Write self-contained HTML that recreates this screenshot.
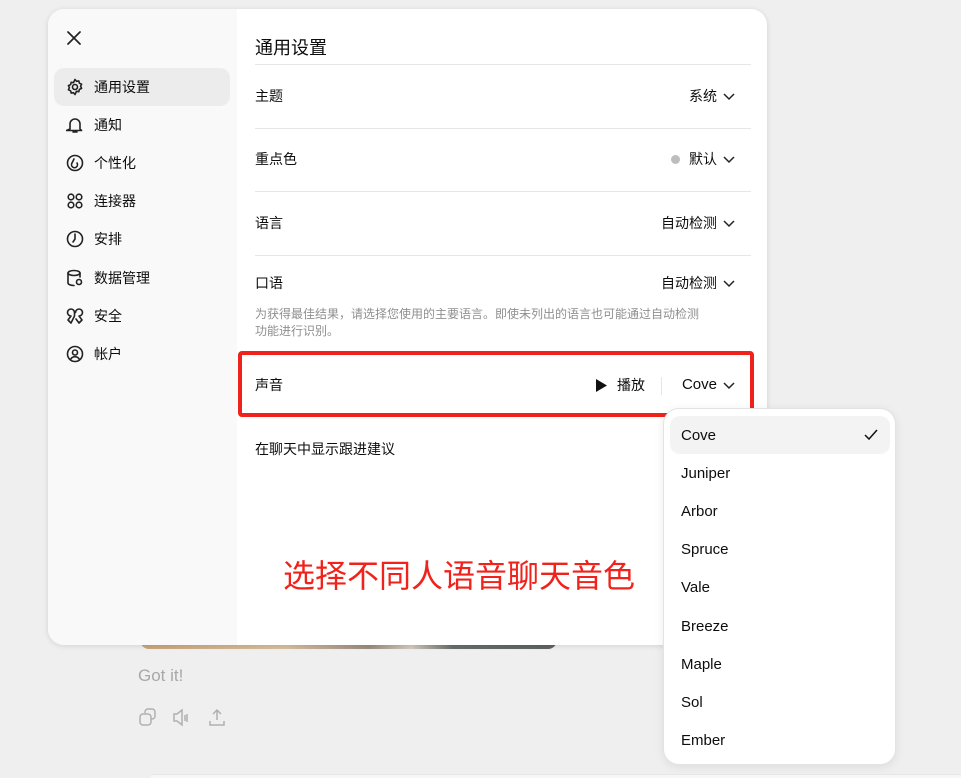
<!DOCTYPE html>
<html><head><meta charset="utf-8"><style>
*{box-sizing:border-box;margin:0;padding:0}
body{width:961px;height:778px;background:#efefef;font-family:"Liberation Sans","Noto Sans CJK SC",sans-serif;position:relative;overflow:hidden;color:#0d0d0d}
.modal{position:absolute;left:48px;top:9px;width:719px;height:636px;background:#fff;border-radius:16px;overflow:hidden;box-shadow:0 1px 6px rgba(0,0,0,.12);display:flex}
.side{width:189px;background:#f9f9f9;position:relative}
.item{position:absolute;left:6px;width:176px;height:38px;display:flex;align-items:center;padding-left:12px;font-size:14px;border-radius:10px}
.item svg{width:18px;height:18px;margin-right:10px;fill:none;stroke:#222;stroke-width:1.6;stroke-linecap:round;stroke-linejoin:round}
.main{position:relative;flex:1}
.title{position:absolute;left:18px;top:25px;font-size:18px}
.hr{position:absolute;left:18px;right:16px;height:1px;background:#e6e6e6}
.lbl{position:absolute;left:18px;font-size:14px;line-height:20px}
.val{position:absolute;right:50px;font-size:14px;line-height:20px;display:flex;align-items:center}
.chev{position:absolute;right:32px;width:12px;height:8px}
.help{position:absolute;left:18px;top:297px;width:450px;font-size:12px;color:#8f8f8f;line-height:17px}
.red{position:absolute;left:238px;top:351px;width:516px;height:66px;border:4px solid #f0231c;border-radius:4px}
.menu{position:absolute;left:663px;top:408px;width:233px;height:357px;background:#fff;border:1px solid #e3e3e3;border-radius:16px;box-shadow:0 2px 10px rgba(0,0,0,.08)}
.mi{position:absolute;left:6px;width:220px;height:38px;padding-left:11px;display:flex;align-items:center;font-size:15px;border-radius:10px}
</style></head><body>
<div style="position:absolute;left:140px;top:640px;width:417px;height:9px;border-radius:0 0 10px 10px;background:linear-gradient(90deg,#c9a57a,#d8c0a0 35%,#9a8d80 55%,#d5ccc0 65%,#6a6d6e 75%,#5f6263)"></div>
<div style="position:absolute;left:138px;top:666px;font-size:17px;color:#a8a8a8">Got it!</div>
<svg style="position:absolute;left:139px;top:708px" width="100" height="20" fill="none" stroke="#b0b0b0" stroke-width="1.5"><rect x="1" y="6" width="11" height="11" rx="3"/><path d="M6 5V4a3 3 0 013-3h4a3 3 0 013 3v4a3 3 0 01-3 3h-1"/><path d="M35 6h3l5-4v15l-5-4h-3z M46 7v6 M48 6v8"/><path d="M78 12V2 M74 6l4-4 4 4 M71 13v4h14v-4"/></svg>
<div style="position:absolute;left:150px;top:774px;width:811px;height:4px;background:#f7f7f7;border-top:1px solid #e6e6e6;border-radius:8px 0 0 0"></div>
<div class="modal">
<div class="side">
<svg style="position:absolute;left:19px;top:22px" width="14" height="14" stroke="#222" stroke-width="1.7" stroke-linecap="round"><path d="M1 1l12 12M13 1L1 13"/></svg>
<div class="item" style="top:59px;background:#ececec"><svg viewBox="0 0 18 18"><circle cx="9" cy="9" r="2.5"/><path d="M9 1.5l1.5 1.8 2.3-.4.6 2.3 2.2 1-1 2.1 1 2.1-2.2 1-.6 2.3-2.3-.4L9 16.5l-1.5-1.8-2.3.4-.6-2.3-2.2-1 1-2.1-1-2.1 2.2-1 .6-2.3 2.3.4z"/></svg>通用设置</div>
<div class="item" style="top:97px"><svg viewBox="0 0 18 18"><path d="M4 13V8a5 5 0 0110 0v5l1.5 1.5h-15z M7 16h4"/></svg>通知</div>
<div class="item" style="top:135px"><svg viewBox="0 0 18 18"><circle cx="9" cy="9" r="7.5"/><path d="M8 5l-2 4a3 3 0 105 0"/></svg>个性化</div>
<div class="item" style="top:173px"><svg viewBox="0 0 18 18"><circle cx="5" cy="5" r="2.8"/><circle cx="13" cy="5" r="2.8"/><circle cx="5" cy="13" r="2.8"/><circle cx="13" cy="13" r="2.8"/></svg>连接器</div>
<div class="item" style="top:211px"><svg viewBox="0 0 18 18"><circle cx="9" cy="9" r="7.5"/><path d="M9 4v5l-2 3"/></svg>安排</div>
<div class="item" style="top:250px"><svg viewBox="0 0 18 18"><ellipse cx="8" cy="4" rx="6" ry="2.5"/><path d="M2 4v10c0 1.4 2.7 2.5 6 2.5 M14 4v4"/><circle cx="13" cy="13" r="2.5"/></svg>数据管理</div>
<div class="item" style="top:288px"><svg viewBox="0 0 18 18"><path d="M5 2a3.5 3.5 0 013.5 3.5V9L5 16 2 13l3-4a3.5 3.5 0 010-7z M13 2a3.5 3.5 0 00-3.5 3.5 M13 2a3.5 3.5 0 010 7l3 4-3 3-3-4"/></svg>安全</div>
<div class="item" style="top:326px"><svg viewBox="0 0 18 18"><circle cx="9" cy="9" r="7.5"/><circle cx="9" cy="7.5" r="2.5"/><path d="M4.5 14.5a5 5 0 019 0"/></svg>帐户</div>
</div>
<div class="main">
<div class="title">通用设置</div>
<div class="hr" style="top:55px"></div>
<div class="lbl" style="top:77px">主题</div><div class="val" style="top:77px">系统</div>
<div class="hr" style="top:119px"></div>
<div class="lbl" style="top:140px">重点色</div><div class="val" style="top:140px"><span style="width:9px;height:9px;border-radius:50%;background:#bdbdbd;margin-right:9px"></span>默认</div>
<div class="hr" style="top:182px"></div>
<div class="lbl" style="top:204px">语言</div><div class="val" style="top:204px">自动检测</div>
<div class="hr" style="top:246px"></div>
<div class="lbl" style="top:264px">口语</div><div class="val" style="top:264px">自动检测</div>
<div class="help">为获得最佳结果，请选择您使用的主要语言。即使未列出的语言也可能通过自动检测功能进行识别。</div>
<div class="lbl" style="top:366px">声音</div>
<div class="val" style="top:366px;right:122px"><svg width="12" height="13" style="margin-right:10px"><path d="M1 0l11 6.5L1 13z" fill="#111"/></svg>播放</div>
<div style="position:absolute;left:424px;top:368px;width:1px;height:18px;background:#e5e5e5"></div>
<div class="val" style="top:366px;font-size:15px">Cove</div>
<div class="lbl" style="top:430px">在聊天中显示跟进建议</div>
<div style="position:absolute;left:46px;top:545px;font-size:32px;line-height:40px;white-space:nowrap;color:#f0231c;font-family:'Noto Sans CJK SC',sans-serif">选择不同人语音聊天音色</div>
<svg class="chev" style="top:84px" viewBox="0 0 12 8"><path d="M1 1l5 5 5-5" fill="none" stroke="#222" stroke-width="1.5"/></svg>
<svg class="chev" style="top:147px" viewBox="0 0 12 8"><path d="M1 1l5 5 5-5" fill="none" stroke="#222" stroke-width="1.5"/></svg>
<svg class="chev" style="top:211px" viewBox="0 0 12 8"><path d="M1 1l5 5 5-5" fill="none" stroke="#222" stroke-width="1.5"/></svg>
<svg class="chev" style="top:271px" viewBox="0 0 12 8"><path d="M1 1l5 5 5-5" fill="none" stroke="#222" stroke-width="1.5"/></svg>
<svg class="chev" style="top:373px" viewBox="0 0 12 8"><path d="M1 1l5 5 5-5" fill="none" stroke="#222" stroke-width="1.5"/></svg>
</div>
</div>
<div class="red"></div>
<div class="menu">
<div class="mi" style="top:7px;background:#f3f3f3">Cove<svg style="position:absolute;right:12px" width="14" height="12"><path d="M1 6l4 4 8-9" fill="none" stroke="#111" stroke-width="1.5"/></svg></div>
<div class="mi" style="top:45px">Juniper</div>
<div class="mi" style="top:83px">Arbor</div>
<div class="mi" style="top:121px">Spruce</div>
<div class="mi" style="top:159px">Vale</div>
<div class="mi" style="top:198px">Breeze</div>
<div class="mi" style="top:236px">Maple</div>
<div class="mi" style="top:274px">Sol</div>
<div class="mi" style="top:312px">Ember</div>
</div>
</body></html>
